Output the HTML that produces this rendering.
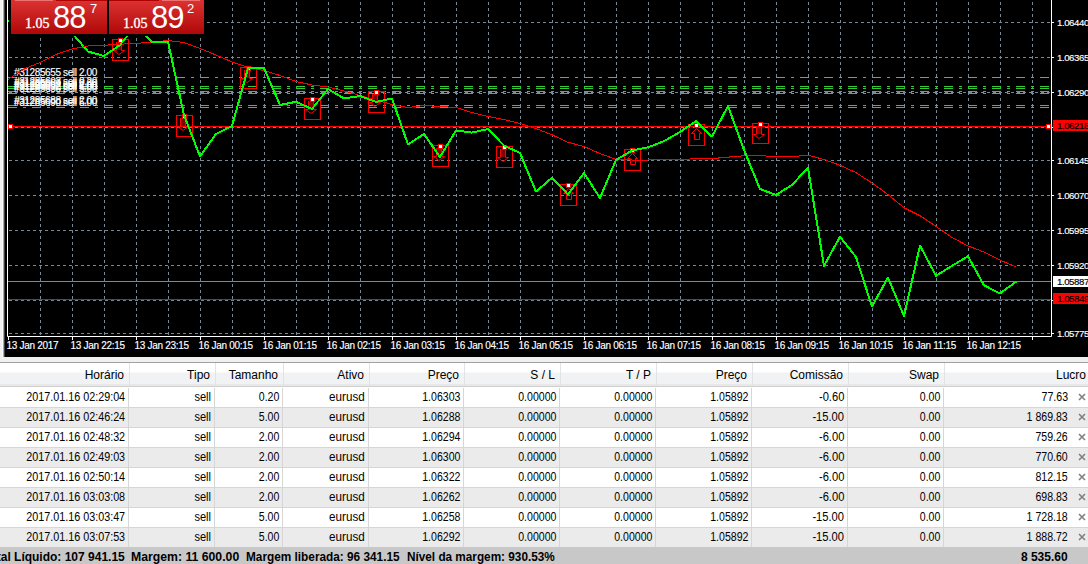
<!DOCTYPE html>
<html><head><meta charset="utf-8"><style>
html,body{margin:0;padding:0;}
body{width:1088px;height:564px;overflow:hidden;position:relative;background:#f0f0f0;font-family:"Liberation Sans",sans-serif;}
#leftstrip{position:absolute;left:0;top:0;width:5px;height:357px;background:linear-gradient(to right,#f0f0f0 0,#f0f0f0 2px,#fafafa 2px,#fafafa 3px,#a8a8a8 3px,#a8a8a8 4px,#404040 4px,#404040 5px);}
#chart{position:absolute;left:5px;top:0;width:1083px;height:357px;background:#000;overflow:hidden;}
#chart svg{position:absolute;left:-5px;top:0;}
.gv{stroke:#778899;stroke-width:1;stroke-dasharray:3 3;stroke-dashoffset:0;shape-rendering:crispEdges;}
.gh{stroke:#778899;stroke-width:1;stroke-dasharray:3 3;stroke-dashoffset:0;shape-rendering:crispEdges;}
.od{stroke:#32cd32;stroke-width:1;stroke-dasharray:9 6 3 6;shape-rendering:crispEdges;}
.yl,.ylb{position:absolute;left:1053px;height:11px;font-size:9.7px;line-height:11px;color:#fff;padding-left:4px;white-space:nowrap;letter-spacing:-0.45px;-webkit-text-stroke:0.15px currentColor;}
.ylb{width:40px;}
.xl{position:absolute;top:340px;font-size:10px;line-height:12px;color:#fff;white-space:nowrap;letter-spacing:-0.3px;-webkit-text-stroke:0.15px #fff;}
.ol{position:absolute;left:14px;font-size:10px;line-height:11px;color:#fff;white-space:nowrap;letter-spacing:-0.38px;-webkit-text-stroke:0.15px #fff;}
.btn{position:absolute;top:0;height:34px;width:96px;background:linear-gradient(#dc3232,#b00808);}
.btn .top{position:absolute;top:0;height:1px;}
.btn .s{position:absolute;top:17px;font-family:"Liberation Serif",serif;font-size:14px;line-height:13px;color:#fff;-webkit-text-stroke:0.35px #fff;}
.btn .b{position:absolute;top:2px;font-size:31px;line-height:31px;color:#fff;letter-spacing:-1px;}
.btn .p{position:absolute;top:2px;font-size:13px;line-height:13px;color:#fff;}
#tablewrap{position:absolute;left:0;top:357px;width:1088px;height:207px;background:#f0f0f0;}
#hline{position:absolute;left:0;top:362px;width:1088px;height:1px;background:#a0a0a0;}
#thead{position:absolute;left:0;top:363px;width:1088px;height:23px;background:linear-gradient(#ffffff 0,#ffffff 9px,#f1f2f4 10px,#f1f2f4 21px,#e8e8e8 21px);border-bottom:1px solid #d0d0d0;}
.th{position:absolute;top:5px;font-size:12px;line-height:14px;color:#000;white-space:nowrap;}
.hsep{position:absolute;top:0;width:1px;height:23px;background:#e3e3e3;}
.tr{position:absolute;left:0;width:1088px;height:20px;}
.tr::after{content:"";position:absolute;left:0;bottom:0;width:1088px;height:1px;background:#d6d6d6;}
.td{position:absolute;top:2px;transform-origin:right center;font-size:12px;line-height:14px;color:#000;white-space:nowrap;}
.dsep{position:absolute;top:0;width:1px;height:20px;background:#d6d6d6;}
.x{position:absolute;left:1077.5px;top:5px;}
#sum{position:absolute;left:0;top:547px;width:1088px;height:17px;background:#c8c8c8;}
#sum .t{position:absolute;top:3px;font-size:12px;line-height:14px;font-weight:bold;color:#000;white-space:nowrap;}
</style></head><body>
<div id="leftstrip"></div>
<div id="chart">
<svg width="1088" height="357" viewBox="0 0 1088 357">
<line x1="40.5" y1="2" x2="40.5" y2="336" class="gv"/>
<line x1="72.5" y1="2" x2="72.5" y2="336" class="gv"/>
<line x1="104.5" y1="2" x2="104.5" y2="336" class="gv"/>
<line x1="136.5" y1="2" x2="136.5" y2="336" class="gv"/>
<line x1="168.5" y1="2" x2="168.5" y2="336" class="gv"/>
<line x1="200.5" y1="2" x2="200.5" y2="336" class="gv"/>
<line x1="232.5" y1="2" x2="232.5" y2="336" class="gv"/>
<line x1="264.5" y1="2" x2="264.5" y2="336" class="gv"/>
<line x1="296.5" y1="2" x2="296.5" y2="336" class="gv"/>
<line x1="328.5" y1="2" x2="328.5" y2="336" class="gv"/>
<line x1="360.5" y1="2" x2="360.5" y2="336" class="gv"/>
<line x1="392.5" y1="2" x2="392.5" y2="336" class="gv"/>
<line x1="424.5" y1="2" x2="424.5" y2="336" class="gv"/>
<line x1="456.5" y1="2" x2="456.5" y2="336" class="gv"/>
<line x1="488.5" y1="2" x2="488.5" y2="336" class="gv"/>
<line x1="520.5" y1="2" x2="520.5" y2="336" class="gv"/>
<line x1="552.5" y1="2" x2="552.5" y2="336" class="gv"/>
<line x1="584.5" y1="2" x2="584.5" y2="336" class="gv"/>
<line x1="616.5" y1="2" x2="616.5" y2="336" class="gv"/>
<line x1="648.5" y1="2" x2="648.5" y2="336" class="gv"/>
<line x1="680.5" y1="2" x2="680.5" y2="336" class="gv"/>
<line x1="712.5" y1="2" x2="712.5" y2="336" class="gv"/>
<line x1="744.5" y1="2" x2="744.5" y2="336" class="gv"/>
<line x1="776.5" y1="2" x2="776.5" y2="336" class="gv"/>
<line x1="808.5" y1="2" x2="808.5" y2="336" class="gv"/>
<line x1="840.5" y1="2" x2="840.5" y2="336" class="gv"/>
<line x1="872.5" y1="2" x2="872.5" y2="336" class="gv"/>
<line x1="904.5" y1="2" x2="904.5" y2="336" class="gv"/>
<line x1="936.5" y1="2" x2="936.5" y2="336" class="gv"/>
<line x1="968.5" y1="2" x2="968.5" y2="336" class="gv"/>
<line x1="1000.5" y1="2" x2="1000.5" y2="336" class="gv"/>
<line x1="1032.5" y1="2" x2="1032.5" y2="336" class="gv"/>
<line x1="9" y1="22.5" x2="1051" y2="22.5" class="gh"/>
<line x1="9" y1="57.5" x2="1051" y2="57.5" class="gh"/>
<line x1="9" y1="92.5" x2="1051" y2="92.5" class="gh"/>
<line x1="9" y1="127.5" x2="1051" y2="127.5" class="gh"/>
<line x1="9" y1="160.5" x2="1051" y2="160.5" class="gh"/>
<line x1="9" y1="195.5" x2="1051" y2="195.5" class="gh"/>
<line x1="9" y1="230.5" x2="1051" y2="230.5" class="gh"/>
<line x1="9" y1="265.5" x2="1051" y2="265.5" class="gh"/>
<line x1="9" y1="300.5" x2="1051" y2="300.5" class="gh"/>
<line x1="9" y1="333.5" x2="1051" y2="333.5" class="gh"/>
<line x1="8" y1="77.5" x2="1051" y2="77.5" class="od"/>
<line x1="8" y1="86.5" x2="1051" y2="86.5" class="od"/>
<line x1="8" y1="88.5" x2="1051" y2="88.5" class="od"/>
<line x1="8" y1="91.5" x2="1051" y2="91.5" class="od"/>
<line x1="8" y1="93.5" x2="1051" y2="93.5" class="od"/>
<line x1="8" y1="105.5" x2="1051" y2="105.5" class="od"/>
<line x1="8" y1="107.5" x2="1051" y2="107.5" class="od"/>
<line x1="8" y1="281.5" x2="1051" y2="281.5" stroke="#778899" stroke-width="1"/>
<line x1="8" y1="126.5" x2="1051" y2="126.5" stroke="#ff0000" stroke-width="1"/>
<line x1="8" y1="299.5" x2="1051" y2="299.5" stroke="#ff0000" stroke-width="1"/>
<rect x="8.5" y="124.5" width="4" height="4" fill="#fff" stroke="#ff0000" stroke-width="1"/>
<rect x="1046.5" y="124.5" width="4" height="4" fill="#fff" stroke="#ff0000" stroke-width="1"/>
<polyline fill="none" stroke="#ff0000" stroke-width="1" shape-rendering="crispEdges" points="8,79.5 24,69 40,62.5 56,54.5 72,49 88,46 104,45.3 120,44.2 136,43.5 152,42 168,40.5 184,42.5 200,48.5 216,55 232,62 248,67.5 264,70.5 280,75.5 296,81.5 312,85 328,87 344,91 360,95.5 376,100 392,104.5 408,107.5 424,105.5 440,106.5 456,107.5 472,112.5 488,116.5 504,119.5 520,123.5 536,128.6 552,134.8 568,142.3 584,146.5 600,153.5 616,159.4 632,160 648,160 680,159.2 712,158.6 744,155.7 760,155.7 776,156.5 792,156.5 808,155.3 824,159.4 840,165.3 856,172.6 872,183 888,194.5 904,207.7 920,215.7 936,226.4 952,237.5 968,245.9 984,252 1000,260 1016,267"/>
<rect x="112.5" y="39.5" width="16" height="21" fill="none" stroke="#ff0000" stroke-width="1" shape-rendering="crispEdges"/>
<rect x="117" y="42" width="4" height="8" fill="#800000"/>
<path d="M116.5,42 V50.5 H113.5 L119,54.5 L124.5,50.5 H121.5 V42" fill="none" stroke="#ff0000" stroke-width="1"/>
<rect x="176.5" y="115.5" width="16" height="21" fill="none" stroke="#ff0000" stroke-width="1" shape-rendering="crispEdges"/>
<rect x="181" y="118" width="4" height="8" fill="#800000"/>
<path d="M180.5,118 V126.5 H177.5 L183,130.5 L188.5,126.5 H185.5 V118" fill="none" stroke="#ff0000" stroke-width="1"/>
<rect x="240.5" y="67.5" width="16" height="21" fill="none" stroke="#ff0000" stroke-width="1" shape-rendering="crispEdges"/>
<rect x="245" y="70" width="4" height="8" fill="#800000"/>
<path d="M244.5,70 V78.5 H241.5 L247,82.5 L252.5,78.5 H249.5 V70" fill="none" stroke="#ff0000" stroke-width="1"/>
<rect x="304.5" y="98.5" width="16" height="21" fill="none" stroke="#ff0000" stroke-width="1" shape-rendering="crispEdges"/>
<rect x="309" y="101" width="4" height="8" fill="#800000"/>
<path d="M308.5,101 V109.5 H305.5 L311,113.5 L316.5,109.5 H313.5 V101" fill="none" stroke="#ff0000" stroke-width="1"/>
<rect x="368.5" y="91.5" width="16" height="21" fill="none" stroke="#ff0000" stroke-width="1" shape-rendering="crispEdges"/>
<rect x="373" y="94" width="4" height="8" fill="#800000"/>
<path d="M372.5,94 V102.5 H369.5 L375,106.5 L380.5,102.5 H377.5 V94" fill="none" stroke="#ff0000" stroke-width="1"/>
<rect x="432.5" y="145.5" width="16" height="21" fill="none" stroke="#ff0000" stroke-width="1" shape-rendering="crispEdges"/>
<rect x="437" y="148" width="4" height="8" fill="#800000"/>
<path d="M436.5,148 V156.5 H433.5 L439,160.5 L444.5,156.5 H441.5 V148" fill="none" stroke="#ff0000" stroke-width="1"/>
<rect x="496.5" y="146.5" width="16" height="21" fill="none" stroke="#ff0000" stroke-width="1" shape-rendering="crispEdges"/>
<rect x="501" y="149" width="4" height="8" fill="#800000"/>
<path d="M500.5,149 V157.5 H497.5 L503,161.5 L508.5,157.5 H505.5 V149" fill="none" stroke="#ff0000" stroke-width="1"/>
<rect x="560.5" y="184.5" width="16" height="21" fill="none" stroke="#ff0000" stroke-width="1" shape-rendering="crispEdges"/>
<path d="M563.5,193.5 L568.5,188.5 L573.5,193.5 H571.5 V199.5 H566.5 V193.5 Z" fill="none" stroke="#ff0000" stroke-width="1"/>
<rect x="624.5" y="149.5" width="16" height="21" fill="none" stroke="#ff0000" stroke-width="1" shape-rendering="crispEdges"/>
<path d="M627.5,158.5 L632.5,153.5 L637.5,158.5 H635.5 V164.5 H630.5 V158.5 Z" fill="none" stroke="#ff0000" stroke-width="1"/>
<rect x="688.5" y="124.5" width="16" height="21" fill="none" stroke="#ff0000" stroke-width="1" shape-rendering="crispEdges"/>
<path d="M691.5,133.5 L696.5,128.5 L701.5,133.5 H699.5 V139.5 H694.5 V133.5 Z" fill="none" stroke="#ff0000" stroke-width="1"/>
<rect x="752.5" y="123.5" width="16" height="20" fill="none" stroke="#ff0000" stroke-width="1" shape-rendering="crispEdges"/>
<rect x="757" y="126" width="4" height="8" fill="#800000"/>
<path d="M756.5,126 V134.5 H753.5 L759,138.5 L764.5,134.5 H761.5 V126" fill="none" stroke="#ff0000" stroke-width="1"/>
<rect x="118.5" y="38.5" width="4" height="4" fill="#fff" stroke="#ff0000" stroke-width="1" shape-rendering="crispEdges"/>
<rect x="182.5" y="114.5" width="4" height="4" fill="#fff" stroke="#ff0000" stroke-width="1" shape-rendering="crispEdges"/>
<rect x="246.5" y="66.5" width="4" height="4" fill="#fff" stroke="#ff0000" stroke-width="1" shape-rendering="crispEdges"/>
<rect x="310.5" y="97.5" width="4" height="4" fill="#fff" stroke="#ff0000" stroke-width="1" shape-rendering="crispEdges"/>
<rect x="374.5" y="90.5" width="4" height="4" fill="#fff" stroke="#ff0000" stroke-width="1" shape-rendering="crispEdges"/>
<rect x="438.5" y="144.5" width="4" height="4" fill="#fff" stroke="#ff0000" stroke-width="1" shape-rendering="crispEdges"/>
<rect x="502.5" y="145.5" width="4" height="4" fill="#fff" stroke="#ff0000" stroke-width="1" shape-rendering="crispEdges"/>
<rect x="566.5" y="183.5" width="4" height="4" fill="#fff" stroke="#ff0000" stroke-width="1" shape-rendering="crispEdges"/>
<rect x="630.5" y="148.5" width="4" height="4" fill="#fff" stroke="#ff0000" stroke-width="1" shape-rendering="crispEdges"/>
<rect x="694.5" y="123.5" width="4" height="4" fill="#fff" stroke="#ff0000" stroke-width="1" shape-rendering="crispEdges"/>
<rect x="758.5" y="122.5" width="4" height="4" fill="#fff" stroke="#ff0000" stroke-width="1" shape-rendering="crispEdges"/>
<polyline fill="none" stroke="#00ff00" stroke-width="2" stroke-linejoin="round" shape-rendering="crispEdges" points="8,21 24,20 40,22 56,26 72,33 88,51.5 104,56 120,45 136,25 152,42 168,42 184,115 200,156.5 216,134 232,126 248,68.2 264,68.2 280,105 296,101.8 312,109 328,89 344,98.5 360,96 376,102 392,98.5 408,144.6 424,134 440,157 456,130.5 472,132.6 488,129 504,145.6 520,153 536,191.6 552,177.8 568,194.5 584,173 600,198 616,160 632,150.5 648,147.3 664,141.2 680,132 696,121.2 712,136.6 728,106 744,150 760,189 776,195 792,185 808,167.6 824,265.8 840,236.8 856,257 872,306.6 888,277.5 904,316.2 920,245.6 936,275.8 952,265.8 968,256.3 984,285.3 1000,293.5 1016,281.8"/>
<rect x="9" y="0" width="195" height="36" fill="#000"/>
<polyline fill="none" stroke="#fff" stroke-width="1" points="7.5,0 7.5,336.5 1051.5,336.5 1051.5,0"/>
<line x1="1052" y1="22.5" x2="1054" y2="22.5" stroke="#fff"/>
<line x1="1052" y1="57.5" x2="1054" y2="57.5" stroke="#fff"/>
<line x1="1052" y1="92.5" x2="1054" y2="92.5" stroke="#fff"/>
<line x1="1052" y1="127.5" x2="1054" y2="127.5" stroke="#fff"/>
<line x1="1052" y1="160.5" x2="1054" y2="160.5" stroke="#fff"/>
<line x1="1052" y1="195.5" x2="1054" y2="195.5" stroke="#fff"/>
<line x1="1052" y1="230.5" x2="1054" y2="230.5" stroke="#fff"/>
<line x1="1052" y1="265.5" x2="1054" y2="265.5" stroke="#fff"/>
<line x1="1052" y1="300.5" x2="1054" y2="300.5" stroke="#fff"/>
<line x1="1052" y1="333.5" x2="1054" y2="333.5" stroke="#fff"/>
<line x1="8.5" y1="337" x2="8.5" y2="340" stroke="#fff"/>
<line x1="72.5" y1="337" x2="72.5" y2="340" stroke="#fff"/>
<line x1="136.5" y1="337" x2="136.5" y2="340" stroke="#fff"/>
<line x1="200.5" y1="337" x2="200.5" y2="340" stroke="#fff"/>
<line x1="264.5" y1="337" x2="264.5" y2="340" stroke="#fff"/>
<line x1="328.5" y1="337" x2="328.5" y2="340" stroke="#fff"/>
<line x1="392.5" y1="337" x2="392.5" y2="340" stroke="#fff"/>
<line x1="456.5" y1="337" x2="456.5" y2="340" stroke="#fff"/>
<line x1="520.5" y1="337" x2="520.5" y2="340" stroke="#fff"/>
<line x1="584.5" y1="337" x2="584.5" y2="340" stroke="#fff"/>
<line x1="648.5" y1="337" x2="648.5" y2="340" stroke="#fff"/>
<line x1="712.5" y1="337" x2="712.5" y2="340" stroke="#fff"/>
<line x1="776.5" y1="337" x2="776.5" y2="340" stroke="#fff"/>
<line x1="840.5" y1="337" x2="840.5" y2="340" stroke="#fff"/>
<line x1="904.5" y1="337" x2="904.5" y2="340" stroke="#fff"/>
<line x1="968.5" y1="337" x2="968.5" y2="340" stroke="#fff"/>
<line x1="1032.5" y1="337" x2="1032.5" y2="340" stroke="#fff"/>
</svg>
</div>
<div class="ol" style="top:66.5px">#31285655 sell 2.00</div><div class="ol" style="top:75.5px">#31285603 sell 0.20</div><div class="ol" style="top:77.5px">#31285669 sell 2.00</div><div class="ol" style="top:79.5px">#31285682 sell 2.00</div><div class="ol" style="top:80.5px">#31285692 sell 5.00</div><div class="ol" style="top:82.5px">#31285630 sell 5.00</div><div class="ol" style="top:94.5px">#31285688 sell 2.00</div><div class="ol" style="top:96.5px">#31285690 sell 5.00</div>
<svg style="position:absolute;left:0;top:0" width="120" height="120"><polyline fill="none" stroke="#ff0000" stroke-width="1" shape-rendering="crispEdges" points="8,79.5 24,69 40,62.5 56,54.5 72,49 88,46 104,45.3 120,44.2"/></svg>
<div class="yl" style="top:17px">1.06440</div><div class="yl" style="top:52px">1.06365</div><div class="yl" style="top:87px">1.06290</div><div class="yl" style="top:155px">1.06145</div><div class="yl" style="top:190px">1.06070</div><div class="yl" style="top:225px">1.05995</div><div class="yl" style="top:260px">1.05920</div><div class="yl" style="top:328px">1.05775</div><div class="ylb" style="top:120px;background:#ff0000;color:#000">1.06218</div><div class="ylb" style="top:276px;background:#fff;color:#000">1.05887</div><div class="ylb" style="top:293px;background:#ff0000;color:#000">1.05849</div>
<div class="xl" style="left:6.5px">13 Jan 2017</div><div class="xl" style="left:70.5px">13 Jan 22:15</div><div class="xl" style="left:134.5px">13 Jan 23:15</div><div class="xl" style="left:198.5px">16 Jan 00:15</div><div class="xl" style="left:262.5px">16 Jan 01:15</div><div class="xl" style="left:326.5px">16 Jan 02:15</div><div class="xl" style="left:390.5px">16 Jan 03:15</div><div class="xl" style="left:454.5px">16 Jan 04:15</div><div class="xl" style="left:518.5px">16 Jan 05:15</div><div class="xl" style="left:582.5px">16 Jan 06:15</div><div class="xl" style="left:646.5px">16 Jan 07:15</div><div class="xl" style="left:710.5px">16 Jan 08:15</div><div class="xl" style="left:774.5px">16 Jan 09:15</div><div class="xl" style="left:838.5px">16 Jan 10:15</div><div class="xl" style="left:902.5px">16 Jan 11:15</div><div class="xl" style="left:966.5px">16 Jan 12:15</div>
<div class="btn" style="left:11px">
 <div class="top" style="left:0;width:4px;background:#d83030"></div>
 <div class="top" style="left:4px;width:38px;background:#f07070"></div>
 <div class="top" style="left:42px;width:3px;background:#d83030"></div>
 <div class="top" style="left:45px;width:51px;background:#b00000"></div>
 <div class="s" style="left:14px">1.05</div>
 <div class="b" style="left:42px">88</div>
 <div class="p" style="left:79px">7</div>
</div>
<div class="btn" style="left:109px;width:95px">
 <div class="top" style="left:0;width:50px;background:#b00000"></div>
 <div class="top" style="left:50px;width:3px;background:#d83030"></div>
 <div class="top" style="left:53px;width:38px;background:#f07070"></div>
 <div class="top" style="left:91px;width:4px;background:#d83030"></div>
 <div class="s" style="left:14px">1.05</div>
 <div class="b" style="left:42px">89</div>
 <div class="p" style="left:78px">2</div>
</div>
<div id="hline"></div><div style="position:absolute;left:0;top:387px;width:1088px;height:1px;background:#fff"></div>
<div id="thead"><div class="th" style="right:964px">Horário</div><div class="th" style="right:878px">Tipo</div><div class="th" style="right:810px">Tamanho</div><div class="th" style="right:724px">Ativo</div><div class="th" style="right:629px">Preço</div><div class="th" style="right:533px">S / L</div><div class="th" style="right:437px">T / P</div><div class="th" style="right:341px">Preço</div><div class="th" style="right:245px">Comissão</div><div class="th" style="right:149px">Swap</div><div class="th" style="right:2px">Lucro</div><div class="hsep" style="left:129px"></div><div class="hsep" style="left:215px"></div><div class="hsep" style="left:283px"></div><div class="hsep" style="left:369px"></div><div class="hsep" style="left:464px"></div><div class="hsep" style="left:560px"></div><div class="hsep" style="left:656px"></div><div class="hsep" style="left:752px"></div><div class="hsep" style="left:848px"></div><div class="hsep" style="left:944px"></div></div>
<div class="tr" style="top:388px;background:#ffffff"><div class="td" style="right:963px;transform:scaleX(0.897)">2017.01.16 02:29:04</div><div class="td" style="right:877px;transform:scaleX(0.92)">sell</div><div class="td" style="right:809px;transform:scaleX(0.88)">0.20</div><div class="td" style="right:723px;transform:scaleX(0.97)">eurusd</div><div class="td" style="right:628px;transform:scaleX(0.88)">1.06303</div><div class="td" style="right:532px;transform:scaleX(0.88)">0.00000</div><div class="td" style="right:436px;transform:scaleX(0.88)">0.00000</div><div class="td" style="right:340px;transform:scaleX(0.88)">1.05892</div><div class="td" style="right:244px;transform:scaleX(0.93)">-0.60</div><div class="td" style="right:148px;transform:scaleX(0.88)">0.00</div><div class="td" style="right:20px;transform:scaleX(0.88)">77.63</div><div class="dsep" style="left:128px"></div><div class="dsep" style="left:214px"></div><div class="dsep" style="left:282px"></div><div class="dsep" style="left:368px"></div><div class="dsep" style="left:463px"></div><div class="dsep" style="left:559px"></div><div class="dsep" style="left:655px"></div><div class="dsep" style="left:751px"></div><div class="dsep" style="left:847px"></div><div class="dsep" style="left:943px"></div><svg class="x" width="8" height="8"><path d="M1,1 L7,7 M7,1 L1,7" stroke="#808080" stroke-width="1.6"/></svg></div><div class="tr" style="top:408px;background:#ebebeb"><div class="td" style="right:963px;transform:scaleX(0.897)">2017.01.16 02:46:24</div><div class="td" style="right:877px;transform:scaleX(0.92)">sell</div><div class="td" style="right:809px;transform:scaleX(0.88)">5.00</div><div class="td" style="right:723px;transform:scaleX(0.97)">eurusd</div><div class="td" style="right:628px;transform:scaleX(0.88)">1.06288</div><div class="td" style="right:532px;transform:scaleX(0.88)">0.00000</div><div class="td" style="right:436px;transform:scaleX(0.88)">0.00000</div><div class="td" style="right:340px;transform:scaleX(0.88)">1.05892</div><div class="td" style="right:244px;transform:scaleX(0.93)">-15.00</div><div class="td" style="right:148px;transform:scaleX(0.88)">0.00</div><div class="td" style="right:20px;transform:scaleX(0.88)">1 869.83</div><div class="dsep" style="left:128px"></div><div class="dsep" style="left:214px"></div><div class="dsep" style="left:282px"></div><div class="dsep" style="left:368px"></div><div class="dsep" style="left:463px"></div><div class="dsep" style="left:559px"></div><div class="dsep" style="left:655px"></div><div class="dsep" style="left:751px"></div><div class="dsep" style="left:847px"></div><div class="dsep" style="left:943px"></div><svg class="x" width="8" height="8"><path d="M1,1 L7,7 M7,1 L1,7" stroke="#808080" stroke-width="1.6"/></svg></div><div class="tr" style="top:428px;background:#ffffff"><div class="td" style="right:963px;transform:scaleX(0.897)">2017.01.16 02:48:32</div><div class="td" style="right:877px;transform:scaleX(0.92)">sell</div><div class="td" style="right:809px;transform:scaleX(0.88)">2.00</div><div class="td" style="right:723px;transform:scaleX(0.97)">eurusd</div><div class="td" style="right:628px;transform:scaleX(0.88)">1.06294</div><div class="td" style="right:532px;transform:scaleX(0.88)">0.00000</div><div class="td" style="right:436px;transform:scaleX(0.88)">0.00000</div><div class="td" style="right:340px;transform:scaleX(0.88)">1.05892</div><div class="td" style="right:244px;transform:scaleX(0.93)">-6.00</div><div class="td" style="right:148px;transform:scaleX(0.88)">0.00</div><div class="td" style="right:20px;transform:scaleX(0.88)">759.26</div><div class="dsep" style="left:128px"></div><div class="dsep" style="left:214px"></div><div class="dsep" style="left:282px"></div><div class="dsep" style="left:368px"></div><div class="dsep" style="left:463px"></div><div class="dsep" style="left:559px"></div><div class="dsep" style="left:655px"></div><div class="dsep" style="left:751px"></div><div class="dsep" style="left:847px"></div><div class="dsep" style="left:943px"></div><svg class="x" width="8" height="8"><path d="M1,1 L7,7 M7,1 L1,7" stroke="#808080" stroke-width="1.6"/></svg></div><div class="tr" style="top:448px;background:#ebebeb"><div class="td" style="right:963px;transform:scaleX(0.897)">2017.01.16 02:49:03</div><div class="td" style="right:877px;transform:scaleX(0.92)">sell</div><div class="td" style="right:809px;transform:scaleX(0.88)">2.00</div><div class="td" style="right:723px;transform:scaleX(0.97)">eurusd</div><div class="td" style="right:628px;transform:scaleX(0.88)">1.06300</div><div class="td" style="right:532px;transform:scaleX(0.88)">0.00000</div><div class="td" style="right:436px;transform:scaleX(0.88)">0.00000</div><div class="td" style="right:340px;transform:scaleX(0.88)">1.05892</div><div class="td" style="right:244px;transform:scaleX(0.93)">-6.00</div><div class="td" style="right:148px;transform:scaleX(0.88)">0.00</div><div class="td" style="right:20px;transform:scaleX(0.88)">770.60</div><div class="dsep" style="left:128px"></div><div class="dsep" style="left:214px"></div><div class="dsep" style="left:282px"></div><div class="dsep" style="left:368px"></div><div class="dsep" style="left:463px"></div><div class="dsep" style="left:559px"></div><div class="dsep" style="left:655px"></div><div class="dsep" style="left:751px"></div><div class="dsep" style="left:847px"></div><div class="dsep" style="left:943px"></div><svg class="x" width="8" height="8"><path d="M1,1 L7,7 M7,1 L1,7" stroke="#808080" stroke-width="1.6"/></svg></div><div class="tr" style="top:468px;background:#ffffff"><div class="td" style="right:963px;transform:scaleX(0.897)">2017.01.16 02:50:14</div><div class="td" style="right:877px;transform:scaleX(0.92)">sell</div><div class="td" style="right:809px;transform:scaleX(0.88)">2.00</div><div class="td" style="right:723px;transform:scaleX(0.97)">eurusd</div><div class="td" style="right:628px;transform:scaleX(0.88)">1.06322</div><div class="td" style="right:532px;transform:scaleX(0.88)">0.00000</div><div class="td" style="right:436px;transform:scaleX(0.88)">0.00000</div><div class="td" style="right:340px;transform:scaleX(0.88)">1.05892</div><div class="td" style="right:244px;transform:scaleX(0.93)">-6.00</div><div class="td" style="right:148px;transform:scaleX(0.88)">0.00</div><div class="td" style="right:20px;transform:scaleX(0.88)">812.15</div><div class="dsep" style="left:128px"></div><div class="dsep" style="left:214px"></div><div class="dsep" style="left:282px"></div><div class="dsep" style="left:368px"></div><div class="dsep" style="left:463px"></div><div class="dsep" style="left:559px"></div><div class="dsep" style="left:655px"></div><div class="dsep" style="left:751px"></div><div class="dsep" style="left:847px"></div><div class="dsep" style="left:943px"></div><svg class="x" width="8" height="8"><path d="M1,1 L7,7 M7,1 L1,7" stroke="#808080" stroke-width="1.6"/></svg></div><div class="tr" style="top:488px;background:#ebebeb"><div class="td" style="right:963px;transform:scaleX(0.897)">2017.01.16 03:03:08</div><div class="td" style="right:877px;transform:scaleX(0.92)">sell</div><div class="td" style="right:809px;transform:scaleX(0.88)">2.00</div><div class="td" style="right:723px;transform:scaleX(0.97)">eurusd</div><div class="td" style="right:628px;transform:scaleX(0.88)">1.06262</div><div class="td" style="right:532px;transform:scaleX(0.88)">0.00000</div><div class="td" style="right:436px;transform:scaleX(0.88)">0.00000</div><div class="td" style="right:340px;transform:scaleX(0.88)">1.05892</div><div class="td" style="right:244px;transform:scaleX(0.93)">-6.00</div><div class="td" style="right:148px;transform:scaleX(0.88)">0.00</div><div class="td" style="right:20px;transform:scaleX(0.88)">698.83</div><div class="dsep" style="left:128px"></div><div class="dsep" style="left:214px"></div><div class="dsep" style="left:282px"></div><div class="dsep" style="left:368px"></div><div class="dsep" style="left:463px"></div><div class="dsep" style="left:559px"></div><div class="dsep" style="left:655px"></div><div class="dsep" style="left:751px"></div><div class="dsep" style="left:847px"></div><div class="dsep" style="left:943px"></div><svg class="x" width="8" height="8"><path d="M1,1 L7,7 M7,1 L1,7" stroke="#808080" stroke-width="1.6"/></svg></div><div class="tr" style="top:508px;background:#ffffff"><div class="td" style="right:963px;transform:scaleX(0.897)">2017.01.16 03:03:47</div><div class="td" style="right:877px;transform:scaleX(0.92)">sell</div><div class="td" style="right:809px;transform:scaleX(0.88)">5.00</div><div class="td" style="right:723px;transform:scaleX(0.97)">eurusd</div><div class="td" style="right:628px;transform:scaleX(0.88)">1.06258</div><div class="td" style="right:532px;transform:scaleX(0.88)">0.00000</div><div class="td" style="right:436px;transform:scaleX(0.88)">0.00000</div><div class="td" style="right:340px;transform:scaleX(0.88)">1.05892</div><div class="td" style="right:244px;transform:scaleX(0.93)">-15.00</div><div class="td" style="right:148px;transform:scaleX(0.88)">0.00</div><div class="td" style="right:20px;transform:scaleX(0.88)">1 728.18</div><div class="dsep" style="left:128px"></div><div class="dsep" style="left:214px"></div><div class="dsep" style="left:282px"></div><div class="dsep" style="left:368px"></div><div class="dsep" style="left:463px"></div><div class="dsep" style="left:559px"></div><div class="dsep" style="left:655px"></div><div class="dsep" style="left:751px"></div><div class="dsep" style="left:847px"></div><div class="dsep" style="left:943px"></div><svg class="x" width="8" height="8"><path d="M1,1 L7,7 M7,1 L1,7" stroke="#808080" stroke-width="1.6"/></svg></div><div class="tr" style="top:528px;background:#ebebeb"><div class="td" style="right:963px;transform:scaleX(0.897)">2017.01.16 03:07:53</div><div class="td" style="right:877px;transform:scaleX(0.92)">sell</div><div class="td" style="right:809px;transform:scaleX(0.88)">5.00</div><div class="td" style="right:723px;transform:scaleX(0.97)">eurusd</div><div class="td" style="right:628px;transform:scaleX(0.88)">1.06292</div><div class="td" style="right:532px;transform:scaleX(0.88)">0.00000</div><div class="td" style="right:436px;transform:scaleX(0.88)">0.00000</div><div class="td" style="right:340px;transform:scaleX(0.88)">1.05892</div><div class="td" style="right:244px;transform:scaleX(0.93)">-15.00</div><div class="td" style="right:148px;transform:scaleX(0.88)">0.00</div><div class="td" style="right:20px;transform:scaleX(0.88)">1 888.72</div><div class="dsep" style="left:128px"></div><div class="dsep" style="left:214px"></div><div class="dsep" style="left:282px"></div><div class="dsep" style="left:368px"></div><div class="dsep" style="left:463px"></div><div class="dsep" style="left:559px"></div><div class="dsep" style="left:655px"></div><div class="dsep" style="left:751px"></div><div class="dsep" style="left:847px"></div><div class="dsep" style="left:943px"></div><svg class="x" width="8" height="8"><path d="M1,1 L7,7 M7,1 L1,7" stroke="#808080" stroke-width="1.6"/></svg></div>
<div id="sum">
 <div class="t" style="left:-29.3px">Capital Líquido: 107 941.15</div>
 <div class="t" style="left:131.2px;transform:scaleX(1.02);transform-origin:left">Margem: 11 600.00</div>
 <div class="t" style="left:245.7px;transform:scaleX(.984);transform-origin:left">Margem liberada: 96 341.15</div>
 <div class="t" style="left:406.6px;transform:scaleX(.98);transform-origin:left">Nível da margem: 930.53%</div>
 <div class="t" style="right:20.4px">8 535.60</div>
</div>
</body></html>
